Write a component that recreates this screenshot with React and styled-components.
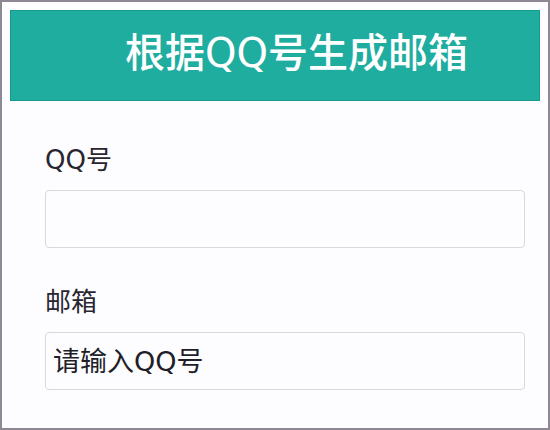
import React from "react";
import styled, { createGlobalStyle } from "styled-components";

const Global = createGlobalStyle`
  html, body {
    margin: 0;
    padding: 0;
    background: #fdfdff;
  }
  * {
    box-sizing: border-box;
  }
`;

const Frame = styled.div`
  width: 550px;
  height: 430px;
  border: 2px solid #8e8794;
  padding: 8px;
  background: #fdfdff;
  font-family: "DejaVu Sans", "Noto Sans CJK SC", sans-serif;
`;

const Header = styled.header`
  height: 91px;
  background: #1fada0;
  border: 1px solid #17998d;
  display: flex;
  align-items: center;
  padding-left: 114px;
  padding-bottom: 6px;
`;

const Title = styled.h1`
  margin: 0;
  font-size: 40px;
  font-weight: 500;
  color: #fff;
  line-height: 1.2;
`;

const Form = styled.form`
  display: flex;
  flex-direction: column;
  padding: 43px 15px 0 35px;
`;

const Field = styled.div`
  display: flex;
  flex-direction: column;
  gap: 14px;
  margin-bottom: ${(p) => (p.$last ? 0 : "38px")};
`;

const Label = styled.label`
  font-size: 26px;
  line-height: 32px;
  color: #2a2630;
`;

const Input = styled.input`
  height: 58px;
  width: 100%;
  border: 1px solid #d8d8de;
  border-radius: 4px;
  background: #fdfdff;
  padding: 0 7px;
  font-family: inherit;
  font-size: 27px;
  color: #221e28;
  outline: none;

  &::placeholder {
    color: #221e28;
  }
`;

export default function App() {
  return (
    <>
      <Global />
      <Frame>
        <Header>
          <Title>根据QQ号生成邮箱</Title>
        </Header>
        <Form>
          <Field>
            <Label htmlFor="qq">QQ号</Label>
            <Input id="qq" type="text" />
          </Field>
          <Field $last>
            <Label htmlFor="mail">邮箱</Label>
            <Input id="mail" type="text" placeholder="请输入QQ号" />
          </Field>
        </Form>
      </Frame>
    </>
  );
}
